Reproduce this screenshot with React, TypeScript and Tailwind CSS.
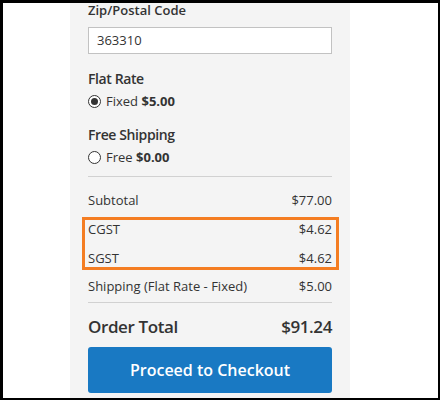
const lines = [
  { label: "Subtotal", amount: "$77.00" },
  { label: "CGST", amount: "$4.62" },
  { label: "SGST", amount: "$4.62" },
  { label: "Shipping (Flat Rate - Fixed)", amount: "$5.00" },
];

function Radio({ checked }: { checked?: boolean }) {
  return (
    <span className="flex h-[13px] w-[13px] shrink-0 items-center justify-center rounded-full border border-[#333] bg-white">
      {checked && <span className="h-[7px] w-[7px] rounded-full bg-[#333]" />}
    </span>
  );
}

function ShippingOption({
  title,
  method,
  price,
  checked,
}: {
  title: string;
  method: string;
  price: string;
  checked?: boolean;
}) {
  return (
    <div>
      <div className="text-[14px] leading-[20px] font-semibold tracking-[-0.4px]">{title}</div>
      <label className="mt-[2px] flex h-[20px] items-center gap-[5px] text-[13px] leading-[20px]">
        <Radio checked={checked} />
        <span>
          {method} <span className="font-bold">{price}</span>
        </span>
      </label>
    </div>
  );
}

function Row({ label, amount, tight }: { label: string; amount: string; tight?: boolean }) {
  return (
    <div
      className={
        tight
          ? "flex justify-between text-[13px] leading-[18px]"
          : "flex justify-between text-[13px] leading-[20px]"
      }
    >
      <span>{label}</span>
      <span>{amount}</span>
    </div>
  );
}

export default function App() {
  return (
    <div
      className="h-[400px] w-[440px] bg-black pt-[3px] pr-[2px] pb-[2px] pl-[3px]"
      style={{ fontFamily: '"Open Sans", sans-serif' }}
    >
      <div className="flex h-full bg-white pl-[67px]">
        <div className="h-full w-[280px] bg-[#f4f4f4] px-[18px] text-[#333]">
          {/* Estimate shipping */}
          <div className="text-[13px] leading-[14px] font-semibold">Zip/Postal Code</div>
          <div className="mt-[10px] flex h-[27px] items-center border border-[#c2c2c2] bg-white px-[8px] text-[13px]">
            363310
          </div>

          <div className="mt-[15px]">
            <ShippingOption title="Flat Rate" method="Fixed" price="$5.00" checked />
          </div>
          <div className="mt-[14px]">
            <ShippingOption title="Free Shipping" method="Free" price="$0.00" />
          </div>

          <div className="mt-[9px] border-t border-[#d1d1d1]" />

          {/* Totals */}
          <div className="mt-[13px]">
            <Row {...lines[0]} />
          </div>
          <div className="mt-[7px] -mr-[7px] -ml-[6px] border-[3px] border-[#f47d22] pr-[4px] pl-[3px]">
            <Row {...lines[1]} tight />
            <div className="mt-[11px]">
              <Row {...lines[2]} tight />
            </div>
          </div>
          <div className="mt-[6px]">
            <Row {...lines[3]} />
          </div>

          <div className="mt-[6px] border-t border-[#d1d1d1]" />

          <div className="mt-[12px] flex justify-between text-[17px] leading-[24px] font-semibold tracking-[-0.4px]">
            <span>Order Total</span>
            <span>$91.24</span>
          </div>

          <button className="mt-[8px] flex h-[46px] w-full items-center justify-center rounded-[3px] bg-[#1979c3] text-[16px] font-semibold text-white">
            Proceed to Checkout
          </button>
        </div>
      </div>
    </div>
  );
}
